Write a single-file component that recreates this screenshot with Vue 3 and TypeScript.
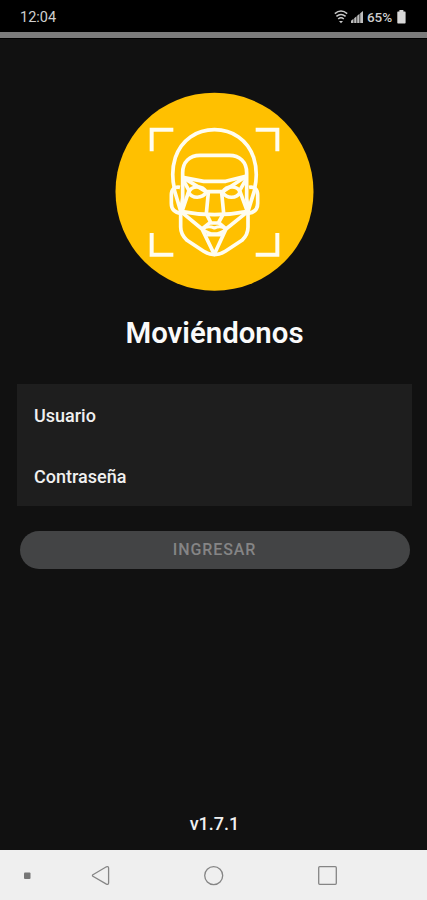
<script setup lang="ts">
import { computed, ref } from 'vue'

interface Field {
  id: string
  label: string
  type: string
}

const fields: Field[] = [
  { id: 'user', label: 'Usuario', type: 'text' },
  { id: 'password', label: 'Contraseña', type: 'password' },
]

const values = ref<Record<string, string>>({ user: '', password: '' })
const incomplete = computed(() => fields.some((f) => !values.value[f.id]))
</script>

<template>
  <div class="screen">
    <header class="status">
      <span class="clock">12:04</span>
      <div class="indicators">
        <svg class="wifi" width="14" height="14" viewBox="0 0 14 14" fill="none" stroke="#c9c9c9" stroke-width="1.5">
          <path d="M.8 3.6Q7-1.5 13.2 3.6" />
          <path d="M2.4 6.4Q7 2.5 11.6 6.4" />
          <path d="M4.2 9Q7 6.6 9.8 9" />
          <path d="M5 10.9h4L7 13.2z" fill="#c9c9c9" stroke="none" />
        </svg>
        <svg class="signal" width="13" height="13" viewBox="0 0 13 13" fill="#bdbdbd">
          <path d="M0 12V9.7L2.5 7.8V12zM3.2 12V7.2L5.5 5.2V12zM6.2 12V4.7L8.5 2.8V12zM9.2 12V2.2L12 0V12z" />
        </svg>
        <span class="percent">65%</span>
        <svg class="battery" width="9" height="14" viewBox="0 0 9 14" fill="#d8d8d8">
          <path d="M2.4 0h4v1.6H8a.6.6 0 0 1 .6.6v10.6a.7.7 0 0 1-.7.7H1a.7.7 0 0 1-.7-.7V2.2a.6.6 0 0 1 .6-.6h1.5z" />
        </svg>
      </div>
    </header>
    <div class="strip"></div>

    <main class="content">
      <svg class="logo" width="210" height="210" viewBox="0 0 630 630" fill="none" stroke="#fffdf0" stroke-width="11" stroke-linejoin="round">
        <circle cx="313.5" cy="311" r="297" fill="#ffc000" stroke="none" />
        <g stroke-width="12" stroke-linejoin="miter">
          <path d="M190 125H125V190" />
          <path d="M437 125H502V190" />
          <path d="M125 435V500H190" />
          <path d="M502 435V500H437" />
        </g>
        <path d="M193 301C186 270 187 237 196 209C214 155 260 125 313.5 125S413 155 431 209C440 237 441 270 434 301" />
        <path d="M212 372L218 330V254C218 222 239 202 270 202H358C389 202 410 222 410 254V330L415 372" />
        <path d="M210 298C194 295 184 304 184 322V346C184 363 194 374 213 376" />
        <path d="M417 298C433 295 443 304 443 322V346C443 363 433 374 414 376" />
        <path d="M191 299L212 370V417C212 434 219 446 231 457L281 490C301 503 326 503 346 490L396 457C408 446 414 434 414 417V370L436 299" />
        <path d="M218 268L281 280H347L410 264" />
        <path d="M218 268L288 311H338L410 264" />
        <path d="M220 276L237 308L216 370" />
        <path d="M408 274L389 308L412 370" />
        <path d="M236 313C244 292 277 291 289 313C276 333 246 332 236 313Z" />
        <path d="M338 313C350 291 384 292 390 313C380 332 350 333 338 313Z" />
        <path d="M295 314L289 377L303 405H325L341 376L335 314" />
        <path d="M212 370Q314 390 414 370" />
        <path d="M212 370L276 423L313 499L348 423L414 370" />
        <path d="M276 423L300 404M348 423L326 404" />
        <path d="M278 424Q291 411 313 420Q335 411 348 424Q313 451 278 424Z" stroke-width="9" />
        <path d="M289 440H337" />
      </svg>

      <h1 class="title">Moviéndonos</h1>

      <form class="form" @submit.prevent>
        <div class="fields">
          <label v-for="field in fields" :key="field.id" class="field">
            <span>{{ field.label }}</span>
            <input v-model="values[field.id]" :type="field.type" />
          </label>
        </div>
        <button class="submit" type="submit" :disabled="incomplete">INGRESAR</button>
      </form>

      <p class="version">v1.7.1</p>
    </main>

    <nav class="navigation">
      <svg width="427" height="50" viewBox="0 0 427 50" fill="none" stroke="#858585" stroke-width="1.3">
        <rect x="24" y="22.4" width="6.5" height="6.5" rx="1" fill="#767676" stroke="none" />
        <path d="M92.9 24.7L106.4 16.8Q108.6 16 108.6 18.2V32.8Q108.6 35 106.4 34.1L92.9 26.3Q92 25.5 92.9 24.7Z" />
        <circle cx="213.7" cy="25.6" r="9" />
        <rect x="318.7" y="16.7" width="17.6" height="17.6" rx="1" />
      </svg>
    </nav>
  </div>
</template>

<style>
body {
  background: #111;
}
</style>

<style scoped>
.screen {
  display: flex;
  flex-direction: column;
  width: 427px;
  height: 900px;
  overflow: hidden;
  background: #111;
  color: #f0f0f0;
  font-family: Roboto, sans-serif;
}

.status {
  display: flex;
  flex: none;
  justify-content: space-between;
  box-sizing: border-box;
  height: 32px;
  padding: 9px 21px 0 20px;
  background: #000;
  color: #cfcfcf;
  line-height: 17px;
}

.clock {
  font-size: 14.5px;
}

.indicators {
  display: flex;
  align-items: flex-start;
}

.wifi {
  margin-top: 1px;
}

.signal {
  margin: 2px 0 0 3px;
}

.percent {
  width: 27px;
  margin: 0 3px 0 3px;
  font-size: 13.5px;
  font-weight: 500;
  letter-spacing: -0.1px;
}

.battery {
  margin-top: 1px;
}

.strip {
  flex: none;
  height: 6px;
  background: #7b7b7b;
  border-bottom: 1px solid #000;
}

.content {
  display: flex;
  flex: 1;
  flex-direction: column;
  min-height: 0;
  padding: 49px 15px 0 17px;
}

.logo {
  flex: none;
  margin-left: 93px;
}

.title {
  margin: 17px 0 0;
  color: #fafafa;
  font-size: 29.4px;
  font-weight: 600;
  line-height: 36px;
  text-align: center;
}

.form {
  display: flex;
  flex-direction: column;
  margin-top: 33px;
}

.fields {
  display: flex;
  flex-direction: column;
  background: #1e1e1e;
}

.field {
  display: flex;
  align-items: center;
  height: 61px;
  padding: 2px 17px 0;
  box-sizing: border-box;
  font-size: 18px;
  font-weight: 500;
}

.field input {
  flex: 1;
  min-width: 0;
  border: 0;
  outline: 0;
  background: transparent;
  color: inherit;
  font: inherit;
}

.submit {
  height: 38px;
  margin: 25px 2px 0 3px;
  padding: 0 1px 1px 0;
  border: 0;
  border-radius: 19px;
  background: #434445;
  color: #858585;
  font-family: inherit;
  font-size: 16px;
  font-weight: 500;
  letter-spacing: 0.9px;
}

.version {
  margin: auto 0 15px;
  font-size: 18px;
  font-weight: 500;
  line-height: 22px;
  text-align: center;
}

.navigation {
  display: flex;
  flex: none;
  height: 50px;
  background: #efefef;
}
</style>
